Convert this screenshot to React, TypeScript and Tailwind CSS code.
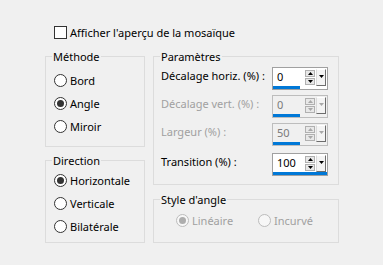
import clsx from "clsx";

function Radio({ label, checked = false, disabled = false }: { label: string; checked?: boolean; disabled?: boolean }) {
  return (
    <label className="flex h-[13px] items-center gap-[3px]">
      <span
        className={clsx(
          "flex h-[13px] w-[13px] shrink-0 items-center justify-center rounded-full border",
          disabled ? "border-[#bcbcbc] bg-[#f7f7f7]" : "border-[#333333] bg-white"
        )}
      >
        {checked && (
          <span className={clsx("h-[7px] w-[7px] rounded-full", disabled ? "bg-[#adadad]" : "bg-[#333333]")} />
        )}
      </span>
      <span className={clsx("whitespace-nowrap", disabled && "text-[#a0a0a0]")}>{label}</span>
    </label>
  );
}

function Arrow({ dir, color }: { dir: "up" | "down"; color: string }) {
  return (
    <svg width="5" height="3" viewBox="0 0 5 3">
      <path d={dir === "up" ? "M2.5 0 L5 3 L0 3 Z" : "M0 0 L5 0 L2.5 3 Z"} fill={color} />
    </svg>
  );
}

function Spin({ value, pct, disabled = false }: { value: string; pct: number; disabled?: boolean }) {
  const arrow = disabled ? "#a8a8a8" : "#000000";
  return (
    <div
      className={clsx(
        "flex h-[23px] w-[56px] flex-col border",
        disabled ? "border-[#bdbdbd] bg-[#f0f0f0]" : "border-[#a0a0a0] bg-white"
      )}
    >
      <div className="flex h-[18px]">
        <div className={clsx("flex-1 pl-[4px] pt-[1px] leading-[15px]", disabled ? "text-[#7a7a7a]" : "text-black")}>
          {value}
        </div>
        <div className="mt-[2px] flex w-[10px] flex-col gap-[1px]">
          <div className="flex h-[7px] items-center justify-center border border-[#b0b0b0] bg-[#e8e8e8]">
            <Arrow dir="up" color={arrow} />
          </div>
          <div className="flex h-[7px] items-center justify-center border border-[#b0b0b0] bg-[#e8e8e8]">
            <Arrow dir="down" color={arrow} />
          </div>
        </div>
        <div className="mx-[1px] mt-[1px] flex h-[17px] w-[10px] justify-center border border-b-[#6d6d6d] border-l-[#dadada] border-r-[#6d6d6d] border-t-white bg-[#f4f4f4] pt-[5px]">
          <Arrow dir="down" color={arrow} />
        </div>
      </div>
      <div className="mt-auto h-[3px] bg-[#0078d7]" style={{ width: `${pct}%` }} />
    </div>
  );
}

function Group({ title, className, children }: { title: string; className?: string; children: React.ReactNode }) {
  return (
    <fieldset className={clsx("border border-[#dcdcdc]", className)}>
      <legend className="ml-[6px] px-[1px] leading-[15px]">{title}</legend>
      {children}
    </fieldset>
  );
}

function Row({ label, disabled = false, children }: { label: string; disabled?: boolean; children: React.ReactNode }) {
  return (
    <div className="flex h-[23px] items-start justify-between">
      <span className={clsx("mt-[1px] leading-[15px]", disabled && "text-[#a0a0a0]")}>{label}</span>
      {children}
    </div>
  );
}

export default function App() {
  return (
    <div className="h-[265px] w-[383px] overflow-hidden bg-[#f0f0f0] font-['Noto_Sans',sans-serif] text-[11px] leading-[15px] text-black">
      <div className="mt-[26px] flex h-[13px] items-center gap-[3px] pl-[54px]">
        <span className="h-[13px] w-[13px] border border-[#333333] bg-white" />
        <span className="whitespace-nowrap">Afficher l'aperçu de la mosaïque</span>
      </div>

      <div className="mt-[10px] flex gap-[8px] pl-[45px]">
        <div className="flex w-[100px] flex-col gap-[6px]">
          <Group title="Méthode" className="h-[98px]">
            <div className="flex flex-col gap-[10px] pl-[8px] pt-[10px]">
              <Radio label="Bord" />
              <Radio label="Angle" checked />
              <Radio label="Miroir" />
            </div>
          </Group>
          <Group title="Direction" className="h-[90px]">
            <div className="flex flex-col gap-[10px] pl-[8px] pt-[6px]">
              <Radio label="Horizontale" checked />
              <Radio label="Verticale" />
              <Radio label="Bilatérale" />
            </div>
          </Group>
        </div>

        <div className="flex w-[186px] flex-col gap-[7px]">
          <Group title="Paramètres" className="h-[136px]">
            <div className="flex flex-col pl-[7px] pr-[10px] pt-[3px]">
              <Row label="Décalage horiz. (%) :">
                <Spin value="0" pct={50} />
              </Row>
              <div className="mt-[5px]">
                <Row label="Décalage vert. (%) :" disabled>
                  <Spin value="0" pct={50} disabled />
                </Row>
              </div>
              <div className="mt-[5px]">
                <Row label="Largeur (%) :" disabled>
                  <Spin value="50" pct={50} disabled />
                </Row>
              </div>
              <div className="mt-[7px]">
                <Row label="Transition (%) :">
                  <Spin value="100" pct={100} />
                </Row>
              </div>
            </div>
          </Group>
          <Group title="Style d'angle" className="h-[51px]">
            <div className="flex pl-[22px] pt-[7px]">
              <div className="w-[82px]">
                <Radio label="Linéaire" checked disabled />
              </div>
              <Radio label="Incurvé" disabled />
            </div>
          </Group>
        </div>
      </div>
    </div>
  );
}
